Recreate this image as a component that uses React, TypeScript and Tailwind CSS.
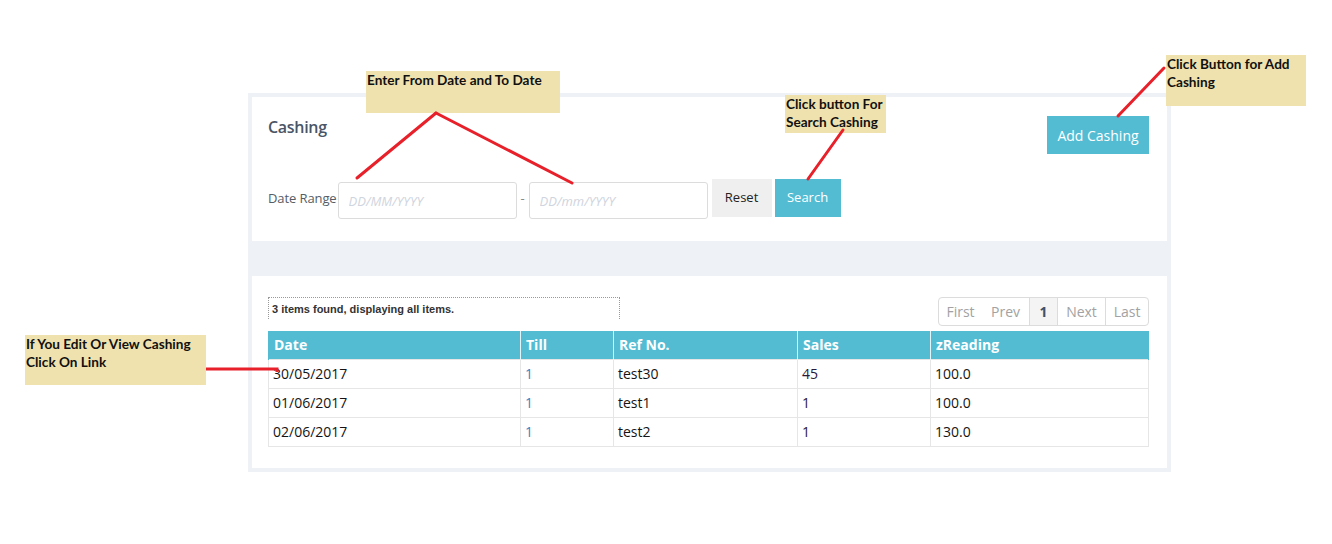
import { ReactNode } from 'react'

const ROWS = [
  { date: '30/05/2017', till: '1', ref: 'test30', sales: '45', z: '100.0' },
  { date: '01/06/2017', till: '1', ref: 'test1', sales: '1', z: '100.0' },
  { date: '02/06/2017', till: '1', ref: 'test2', sales: '1', z: '130.0' },
]

const COLS = [
  { l: 'Date', w: 'w-[252px]' },
  { l: 'Till', w: 'w-[93px]' },
  { l: 'Ref No.', w: 'w-[184px]' },
  { l: 'Sales', w: 'w-[133px]' },
  { l: 'zReading', w: '' },
]

function Note({ className, children }: { className: string; children: ReactNode }) {
  return (
    <div className={`absolute bg-[#efe2af] font-['Lato',sans-serif] font-bold text-[13.6px] leading-[18px] text-[#111] ${className}`}>
      {children}
    </div>
  )
}

export default function App() {
  return (
    <div className="relative w-[1332px] h-[544px] bg-white font-['Open_Sans',sans-serif] overflow-hidden">
      <div className="ml-[248px] mt-[93px] w-[923px] bg-[#eef1f5] p-[4px] inline-block align-top">
        {/* filter panel */}
        <div className="bg-white h-[144px] pl-4 pr-[18px] pt-[19px]">
          <div className="flex justify-between items-start">
            <h2 className="-mt-[1px] text-[16px] font-semibold text-[#4a5566] tracking-[-0.3px]">Cashing</h2>
            <button className="w-[102px] h-[38px] bg-[#53bcd3] text-white text-[14px]">Add Cashing</button>
          </div>
          <div className="flex items-start mt-[25px] h-[41px]">
            <span className="mt-[10px] text-[13px] text-[#555d66] mr-[1px] tracking-[-0.1px]">Date Range</span>
            <input placeholder="DD/MM/YYYY" className="mt-[3px] w-[179px] h-[37px] border border-[#dcdcdc] rounded-[3px] px-[10px] text-[13px] italic placeholder:text-[#cfd5de]" />
            <span className="mt-[10px] w-[12px] text-center text-[13px] text-[#888]">-</span>
            <input placeholder="DD/mm/YYYY" className="mt-[3px] w-[179px] h-[37px] border border-[#dcdcdc] rounded-[3px] px-[10px] text-[13px] italic placeholder:text-[#cfd5de]" />
            <button className="ml-[4px] w-[60px] h-[38px] bg-[#efefef] text-[13px] text-[#222]">Reset</button>
            <button className="ml-[3px] w-[66px] h-[38px] bg-[#53bcd3] text-[13px] text-white">Search</button>
          </div>
        </div>

        <div className="h-[35px]" />

        {/* results panel */}
        <div className="bg-white h-[192px] pl-4 pr-[18px] pt-[21px]">
          <div className="flex justify-between items-start h-[29px]">
            <div className="w-[352px] h-[22px] border border-b-0 border-dotted border-[#999] pl-[3px] text-[11px] font-bold text-[#333] leading-[22px] font-['Liberation_Sans',sans-serif]">
              3 items found, displaying all items.
            </div>
            <div className="flex h-[29px] border border-[#dcdcdc] rounded-[4px] text-[14px] text-[#a2a2a2] overflow-hidden">
              <span className="w-[43px] flex items-center justify-center">First</span>
              <span className="w-[47px] flex items-center justify-center">Prev</span>
              <span className="w-[29px] flex items-center justify-center border-x border-[#dcdcdc] bg-[#f4f4f4] text-[#3f5068] font-bold">1</span>
              <span className="w-[48px] flex items-center justify-center border-r border-[#dcdcdc]">Next</span>
              <span className="w-[42px] flex items-center justify-center">Last</span>
            </div>
          </div>
          <table className="mt-[5px] w-[881px] border-collapse text-[14px]">
            <thead>
              <tr className="bg-[#53bcd3] h-[28px]">
                {COLS.map(c => (
                  <th key={c.l} className={`${c.w} text-left font-bold text-white px-[5px] border-x border-[#e3f4f8] first:border-l-[#53bcd3] last:border-r-[#53bcd3]`}>{c.l}</th>
                ))}
              </tr>
            </thead>
            <tbody>
              {ROWS.map(r => (
                <tr key={r.date} className="h-[29px] text-[#141414]">
                  <td className="border border-[#e6e6e6] px-[4px]">{r.date}</td>
                  <td className="border border-[#e6e6e6] px-[4px] text-[#3b7fc4]">{r.till}</td>
                  <td className="border border-[#e6e6e6] px-[4px]">{r.ref}</td>
                  <td className="border border-[#e6e6e6] px-[4px] text-[#2a1838]">{r.sales}</td>
                  <td className="border border-[#e6e6e6] px-[4px]">{r.z}</td>
                </tr>
              ))}
            </tbody>
          </table>
        </div>
      </div>

      {/* annotations */}
      <Note className="left-[366px] top-[71px] w-[194px] h-[42px] pl-[1px]">Enter From Date and To Date</Note>
      <Note className="left-[785px] top-[95px] w-[101px] h-[38px] pl-[1px]">Click button For<br />Search Cashing</Note>
      <Note className="left-[1166px] top-[55px] w-[140px] h-[51px] pl-[1px]">Click Button for Add<br />Cashing</Note>
      <Note className="left-[25px] top-[335px] w-[181px] h-[50px] pl-[1px]">If You Edit Or View Cashing<br />Click On Link</Note>

      <svg className="absolute left-0 top-0 pointer-events-none" width="1332" height="544">
        <g stroke="#e8202a" strokeWidth="3" strokeLinecap="round" fill="none">
          <line x1="436" y1="113" x2="357" y2="178" />
          <line x1="436" y1="113" x2="572" y2="183" />
          <line x1="843" y1="130" x2="808" y2="179" />
          <line x1="1164" y1="68" x2="1118" y2="116" />
          <polyline points="206,369 277,369 277,372" strokeLinecap="butt" />
        </g>
      </svg>
    </div>
  )
}
